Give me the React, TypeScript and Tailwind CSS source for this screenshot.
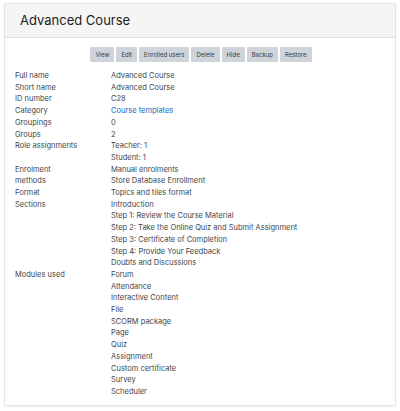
import React from 'react'

const buttons = ['View', 'Edit', 'Enrolled users', 'Delete', 'Hide', 'Backup', 'Restore']

const rows: { label: string; values: React.ReactNode[] }[] = [
    { label: 'Full name', values: ['Advanced Course'] },
    { label: 'Short name', values: ['Advanced Course'] },
    { label: 'ID number', values: ['C28'] },
    { label: 'Category', values: [<span className="text-[#0f6cbf]">Course templates</span>] },
    { label: 'Groupings', values: ['0'] },
    { label: 'Groups', values: ['2'] },
    { label: 'Role assignments', values: ['Teacher: 1', 'Student: 1'] },
    { label: 'Enrolment\nmethods', values: ['Manual enrolments', 'Store Database Enrollment'] },
    { label: 'Format', values: ['Topics and tiles format'] },
    {
        label: 'Sections',
        values: [
            'Introduction',
            'Step 1: Review the Course Material',
            'Step 2: Take the Online Quiz and Submit Assignment',
            'Step 3: Certificate of Completion',
            'Step 4: Provide Your Feedback',
            'Doubts and Discussions',
        ],
    },
    {
        label: 'Modules used',
        values: [
            'Forum',
            'Attendance',
            'Interactive Content',
            'File',
            'SCORM package',
            'Page',
            'Quiz',
            'Assignment',
            'Custom certificate',
            'Survey',
            'Scheduler',
        ],
    },
]

const App: React.FC = () => {
    return (
        <div className="w-[400px] h-[411px] bg-white pt-[3px] px-[4px] font-[Inter,sans-serif]">
            <div className="w-[392px] h-[403px] border border-[#e3e3e3] rounded-[2px] shadow-[0_1px_2px_rgba(0,0,0,0.06)]">
                <div className="h-[34px] bg-[#f5f5f5] border-b border-[#dedede] flex items-center pl-[15px]">
                    <h2 className="text-[13px] text-[#1d2125]">Advanced Course</h2>
                </div>
                <div className="flex justify-center gap-[2px] mt-[9px] pl-[2px]">
                    {buttons.map((b) => (
                        <button
                            key={b}
                            className="h-[15px] px-[5px] bg-[#ced4da] text-[6px] text-[#343a40] rounded-[1px]"
                        >
                            {b}
                        </button>
                    ))}
                </div>
                <div className="mt-[8px] pl-[10px] text-[7.5px] leading-[11.7px] text-[#40464c]">
                    {rows.map((r) => (
                        <div key={r.label} className="flex">
                            <div className="w-[96px] shrink-0 pr-[14px] whitespace-pre-line">{r.label}</div>
                            <div className="flex flex-col">
                                {r.values.map((v, i) => (
                                    <div key={i}>{v}</div>
                                ))}
                            </div>
                        </div>
                    ))}
                </div>
            </div>
        </div>
    )
}

export default App
